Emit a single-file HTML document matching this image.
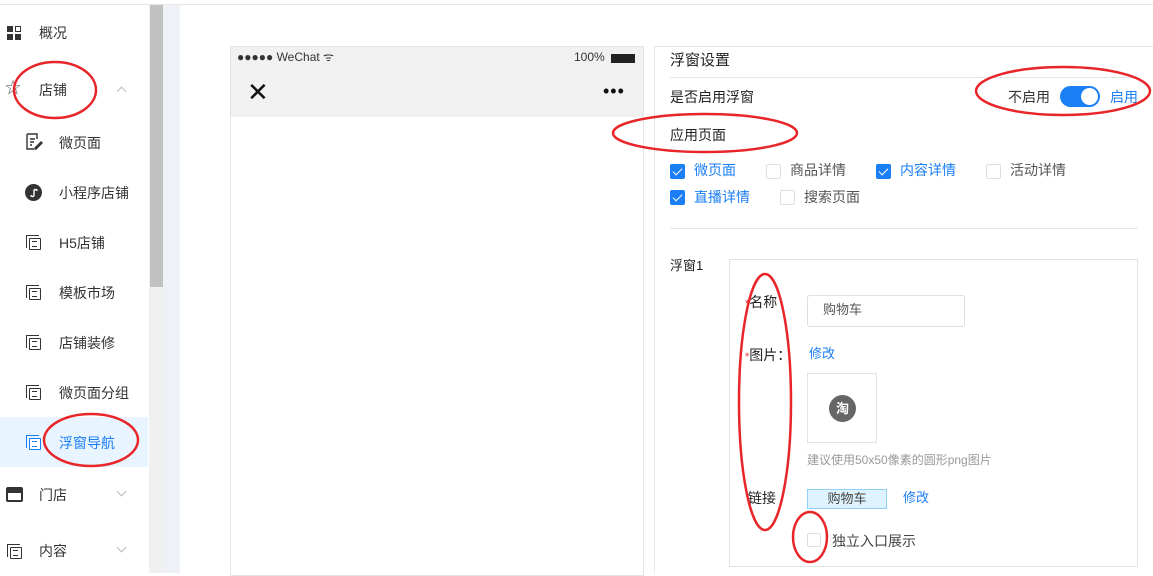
<!DOCTYPE html>
<html><head><meta charset="utf-8"><style>
*{margin:0;padding:0;box-sizing:border-box}
body{width:1153px;height:573px;overflow:hidden;background:#fff;font-family:"Liberation Sans","Noto Sans CJK SC",sans-serif;font-size:14px;line-height:1.15;color:#333;position:relative}
.a{position:absolute;white-space:nowrap}
.ic{position:absolute;width:12px;height:12px;border:1.5px solid #333;border-radius:1px;background:#fff}
.ic:before{content:"";position:absolute;left:-4px;top:-4px;width:12px;height:12px;border-left:1.5px solid #333;border-top:1.5px solid #333}
.ic:after{content:"";position:absolute;left:2px;top:2px;width:5px;height:4px;border-top:1.2px solid #333;border-bottom:1.2px solid #333}
.ic.bl,.ic.bl:before,.ic.bl:after{border-color:#1a7ef5}
.cb{position:absolute;width:15px;height:15px;border:1px solid #dcdfe6;border-radius:2px;background:#fff}
.cb.on{background:#1a7ef5;border-color:#1a7ef5}
.cb.on:after{content:"";position:absolute;left:4px;top:1px;width:4px;height:8px;border:solid #fff;border-width:0 1.5px 1.5px 0;transform:rotate(45deg)}
.blue{color:#1a7ef5}
.chev{position:absolute;width:7px;height:7px;border:solid #bbb;border-width:1px 1px 0 0}
</style></head><body>
<div class="a" style="left:0;top:4px;width:1153px;height:1px;background:#e6e6e6"></div>
<div class="a" style="left:163px;top:5px;width:17px;height:568px;background:#eef1f5"></div>
<div class="a" style="left:149px;top:5px;width:14px;height:568px;background:#f0f0f0"></div>
<div class="a" style="left:150px;top:5px;width:13px;height:282px;background:#c1c1c1"></div>
<div class="a" style="left:0;top:417px;width:148px;height:50px;background:#e8f4ff"></div>

<!-- sidebar -->
<div class="a" style="left:7px;top:26px;width:6px;height:6px;background:#333"></div>
<div class="a" style="left:15px;top:26px;width:6px;height:6px;border:1.5px solid #333"></div>
<div class="a" style="left:7px;top:34px;width:6px;height:6px;background:#333"></div>
<div class="a" style="left:15px;top:34px;width:6px;height:6px;background:#333"></div>
<div class="a" style="left:39px;top:25px">概况</div>
<div class="a" style="left:5px;top:80px;font-size:16px;color:#666">☆</div>
<div class="a" style="left:39px;top:82px">店铺</div>
<div class="chev" style="left:118px;top:88px;transform:rotate(-45deg)"></div>
<svg class="a" style="left:25px;top:133px" width="18" height="18"><path d="M2 1h10v5M2 1v15h7M5 6h5M5 9h4M5 12h2M10 15l6-6 1 1-6 6h-1z" fill="none" stroke="#333" stroke-width="1.4"/></svg>
<div class="a" style="left:59px;top:135px">微页面</div>
<div class="a" style="left:25px;top:184px;width:17px;height:17px;border-radius:50%;background:#333"></div>
<svg class="a" style="left:25px;top:184px" width="17" height="17"><path d="M6 11c0 2 3 2 3 0V7c0-2 3-2 3 0" fill="none" stroke="#fff" stroke-width="1.4"/></svg>
<div class="a" style="left:59px;top:185px">小程序店铺</div>
<div class="ic" style="left:29px;top:238px"></div><div class="a" style="left:59px;top:235px">H5店铺</div>
<div class="ic" style="left:29px;top:288px"></div><div class="a" style="left:59px;top:285px">模板市场</div>
<div class="ic" style="left:29px;top:338px"></div><div class="a" style="left:59px;top:335px">店铺装修</div>
<div class="ic" style="left:29px;top:388px"></div><div class="a" style="left:59px;top:385px">微页面分组</div>
<div class="ic bl" style="left:29px;top:438px"></div><div class="a blue" style="left:59px;top:435px">浮窗导航</div>
<div class="a" style="left:6px;top:487px;width:17px;height:15px;border:2px solid #333;border-top-width:6px;border-radius:2px"></div>
<div class="a" style="left:39px;top:487px">门店</div>
<div class="chev" style="left:118px;top:488px;transform:rotate(135deg)"></div>
<div class="ic" style="left:10px;top:547px"></div>
<div class="a" style="left:39px;top:543px">内容</div>
<div class="chev" style="left:118px;top:544px;transform:rotate(135deg)"></div>

<!-- phone -->
<div class="a" style="left:230px;top:46px;width:414px;height:530px;border:1px solid #e5e5e5"></div>
<div class="a" style="left:231px;top:47px;width:412px;height:70px;background:#f1f1f1"></div>
<div class="a" style="left:237px;top:51px;font-size:12px;color:#333">●●●●● WeChat ᯤ</div>
<div class="a" style="left:574px;top:51px;font-size:12px;color:#333">100%</div>
<div class="a" style="left:611px;top:54px;width:24px;height:9px;background:#222"></div>
<div class="a" style="left:247px;top:79px;font-size:26px;line-height:26px;color:#111">✕</div>
<div class="a" style="left:603px;top:82px;font-size:18px;line-height:18px;letter-spacing:1px;color:#111">•••</div>

<!-- right panel -->
<div class="a" style="left:654px;top:46px;width:1px;height:527px;background:#e5e5e5"></div>
<div class="a" style="left:654px;top:46px;width:499px;height:1px;background:#e5e5e5"></div>
<div class="a" style="left:670px;top:52px;font-size:15px;color:#222">浮窗设置</div>
<div class="a" style="left:670px;top:77px;width:468px;height:1px;background:#e5e5e5"></div>
<div class="a" style="left:670px;top:89px;color:#222">是否启用浮窗</div>
<div class="a" style="left:1008px;top:89px;color:#333">不启用</div>
<div class="a" style="left:1060px;top:86px;width:40px;height:21px;border-radius:11px;background:#1a7ef5"></div>
<div class="a" style="left:1081px;top:88px;width:17px;height:17px;border-radius:50%;background:#fff"></div>
<div class="a blue" style="left:1110px;top:89px">启用</div>
<div class="a" style="left:670px;top:127px;color:#222">应用页面</div>
<div class="cb on" style="left:670px;top:164px"></div><div class="a blue" style="left:694px;top:162px">微页面</div>
<div class="cb" style="left:766px;top:164px"></div><div class="a" style="left:790px;top:162px;color:#555">商品详情</div>
<div class="cb on" style="left:876px;top:164px"></div><div class="a blue" style="left:900px;top:162px">内容详情</div>
<div class="cb" style="left:986px;top:164px"></div><div class="a" style="left:1010px;top:162px;color:#555">活动详情</div>
<div class="cb on" style="left:670px;top:190px"></div><div class="a blue" style="left:694px;top:189px">直播详情</div>
<div class="cb" style="left:780px;top:190px"></div><div class="a" style="left:804px;top:189px;color:#555">搜索页面</div>
<div class="a" style="left:670px;top:228px;width:468px;height:1px;background:#e5e5e5"></div>
<div class="a" style="left:670px;top:259px;font-size:13px;color:#222">浮窗1</div>
<div class="a" style="left:729px;top:259px;width:409px;height:308px;border:1px solid #e3e3e3"></div>
<div class="a" style="left:745px;top:294px;color:#222"><span style="color:#e33;font-size:11px">*</span>名称</div>
<div class="a" style="left:807px;top:295px;width:158px;height:32px;border:1px solid #dcdfe6;border-radius:3px"></div>
<div class="a" style="left:823px;top:303px;color:#555;font-size:13px">购物车</div>
<div class="a" style="left:745px;top:347px;color:#222"><span style="color:#e33;font-size:11px">*</span>图片：</div>
<div class="a blue" style="left:809px;top:347px;font-size:13px">修改</div>
<div class="a" style="left:807px;top:373px;width:70px;height:70px;border:1px solid #e3e3e3"></div>
<div class="a" style="left:829px;top:395px;width:27px;height:27px;border-radius:50%;background:#666;color:#fff;font-size:13px;line-height:27px;text-align:center;font-weight:bold">淘</div>
<div class="a" style="left:807px;top:454px;font-size:12px;color:#999">建议使用50x50像素的圆形png图片</div>
<div class="a" style="left:748px;top:490px;color:#222">链接</div>
<div class="a" style="left:807px;top:489px;width:80px;height:20px;background:#dff3ff;border:1px solid #8fd0ff;text-align:center;font-size:13px;line-height:18px;color:#444">购物车</div>
<div class="a blue" style="left:903px;top:491px;font-size:13px">修改</div>
<div class="cb" style="left:807px;top:533px;width:14px;height:14px"></div>
<div class="a" style="left:832px;top:533px;color:#444">独立入口展示</div>

<svg class="a" style="left:0;top:0" width="1153" height="573">
<g fill="none" stroke="#e8262a" stroke-width="2.5">
<ellipse cx="55" cy="90" rx="41" ry="28"/>
<ellipse cx="91" cy="440" rx="47" ry="26"/>
<ellipse cx="1063" cy="91" rx="87" ry="24"/>
<ellipse cx="705" cy="133" rx="92" ry="19"/>
<ellipse cx="765" cy="402" rx="26" ry="128"/>
<ellipse cx="810" cy="537" rx="17" ry="25"/>
</g></svg>
</body></html>
